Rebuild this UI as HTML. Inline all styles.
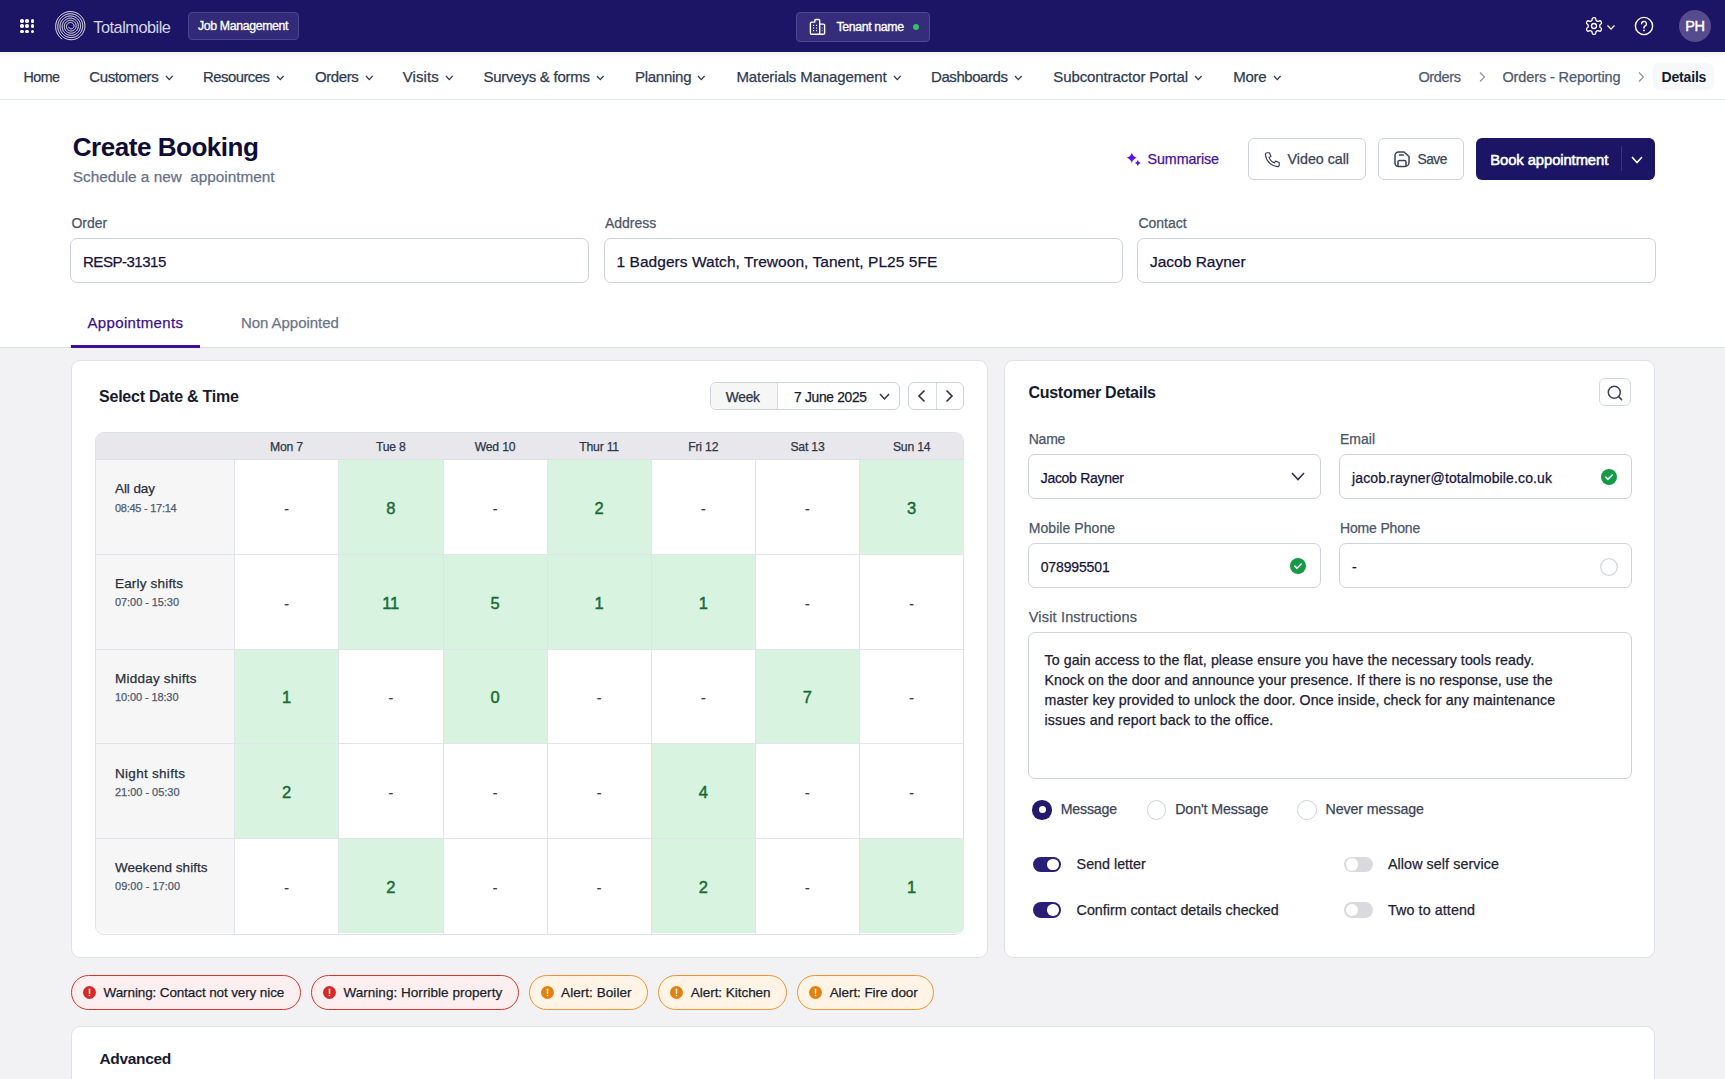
<!DOCTYPE html>
<html><head><meta charset="utf-8"><title>Create Booking</title>
<style>
html,body{margin:0;padding:0;}
body{width:1725px;height:1079px;position:relative;overflow:hidden;background:#f2f2f5;font-family:"Liberation Sans",sans-serif;}
.t{position:absolute;line-height:1em;white-space:nowrap;}
.r{position:absolute;}
svg.r{overflow:visible;}
</style></head><body>
<div class="r" style="left:0px;top:0px;width:1725px;height:52px;background:#1c1464;"></div>
<div class="r" style="left:20.0px;top:19.0px;width:3.6px;height:3.6px;background:#fff;border-radius:50%;"></div>
<div class="r" style="left:20.0px;top:24.3px;width:3.6px;height:3.6px;background:#fff;border-radius:50%;"></div>
<div class="r" style="left:20.0px;top:29.6px;width:3.6px;height:3.6px;background:#fff;border-radius:50%;"></div>
<div class="r" style="left:25.3px;top:19.0px;width:3.6px;height:3.6px;background:#fff;border-radius:50%;"></div>
<div class="r" style="left:25.3px;top:24.3px;width:3.6px;height:3.6px;background:#fff;border-radius:50%;"></div>
<div class="r" style="left:25.3px;top:29.6px;width:3.6px;height:3.6px;background:#fff;border-radius:50%;"></div>
<div class="r" style="left:30.6px;top:19.0px;width:3.6px;height:3.6px;background:#fff;border-radius:50%;"></div>
<div class="r" style="left:30.6px;top:24.3px;width:3.6px;height:3.6px;background:#fff;border-radius:50%;"></div>
<div class="r" style="left:30.6px;top:29.6px;width:3.6px;height:3.6px;background:#fff;border-radius:50%;"></div>
<svg class="r" style="left:55px;top:10px" width="32" height="32" viewBox="0 0 32 32"><path d="M13.73 16.95 L13.76 17.09 L13.81 17.23 L13.86 17.37 L13.92 17.50 L13.99 17.63 L14.07 17.76 L14.15 17.88 L14.25 18.00 L14.35 18.11 L14.47 18.22 L14.59 18.32 L14.72 18.42 L14.85 18.50 L14.99 18.58 L15.14 18.65 L15.29 18.70 L15.45 18.75 L15.61 18.79 L15.78 18.82 L15.95 18.84 L16.12 18.85 L16.29 18.84 L16.46 18.83 L16.64 18.80 L16.81 18.76 L16.98 18.71 L17.15 18.65 L17.32 18.58 L17.48 18.50 L17.63 18.40 L17.79 18.30 L17.93 18.18 L18.07 18.05 L18.20 17.92 L18.33 17.77 L18.44 17.62 L18.55 17.46 L18.64 17.29 L18.73 17.11 L18.80 16.92 L18.86 16.74 L18.91 16.54 L18.95 16.34 L18.97 16.14 L18.99 15.94 L18.99 15.73 L18.97 15.52 L18.94 15.32 L18.90 15.11 L18.84 14.91 L18.78 14.70 L18.69 14.51 L18.60 14.31 L18.49 14.12 L18.37 13.94 L18.23 13.77 L18.09 13.60 L17.93 13.44 L17.76 13.29 L17.58 13.15 L17.40 13.03 L17.20 12.91 L16.99 12.81 L16.78 12.72 L16.56 12.64 L16.34 12.58 L16.10 12.53 L15.87 12.49 L15.63 12.47 L15.39 12.47 L15.15 12.48 L14.91 12.51 L14.67 12.55 L14.43 12.61 L14.20 12.69 L13.96 12.78 L13.74 12.88 L13.52 13.00 L13.30 13.14 L13.10 13.29 L12.90 13.45 L12.71 13.63 L12.54 13.82 L12.37 14.02 L12.22 14.23 L12.08 14.45 L11.96 14.68 L11.85 14.93 L11.75 15.18 L11.68 15.43 L11.61 15.69 L11.57 15.96 L11.54 16.23 L11.53 16.51 L11.53 16.78 L11.56 17.06 L11.60 17.33 L11.66 17.60 L11.74 17.87 L11.83 18.14 L11.94 18.40 L12.07 18.65 L12.22 18.90 L12.38 19.14 L12.56 19.37 L12.76 19.58 L12.97 19.79 L13.19 19.98 L13.42 20.16 L13.67 20.32 L13.93 20.47 L14.20 20.60 L14.47 20.71 L14.76 20.81 L15.05 20.89 L15.35 20.95 L15.66 20.99 L15.96 21.01 L16.27 21.01 L16.58 21.00 L16.89 20.96 L17.20 20.90 L17.50 20.82 L17.81 20.72 L18.10 20.61 L18.39 20.47 L18.67 20.31 L18.94 20.14 L19.20 19.95 L19.45 19.74 L19.68 19.51 L19.90 19.27 L20.11 19.01 L20.30 18.74 L20.47 18.46 L20.63 18.17 L20.77 17.86 L20.88 17.55 L20.98 17.22 L21.06 16.89 L21.11 16.56 L21.15 16.22 L21.16 15.88 L21.15 15.53 L21.12 15.19 L21.06 14.84 L20.99 14.50 L20.89 14.17 L20.77 13.84 L20.63 13.51 L20.47 13.20 L20.28 12.89 L20.08 12.60 L19.86 12.32 L19.62 12.05 L19.36 11.80 L19.08 11.56 L18.79 11.34 L18.49 11.14 L18.17 10.96 L17.83 10.80 L17.49 10.66 L17.14 10.54 L16.78 10.45 L16.41 10.37 L16.04 10.33 L15.66 10.30 L15.29 10.30 L14.91 10.32 L14.53 10.37 L14.15 10.44 L13.78 10.54 L13.42 10.66 L13.06 10.80 L12.71 10.97 L12.37 11.16 L12.04 11.37 L11.72 11.60 L11.42 11.86 L11.14 12.13 L10.87 12.42 L10.62 12.73 L10.39 13.06 L10.18 13.40 L9.99 13.76 L9.83 14.13 L9.68 14.51 L9.57 14.90 L9.48 15.29 L9.41 15.70 L9.37 16.11 L9.35 16.52 L9.36 16.93 L9.40 17.35 L9.47 17.76 L9.56 18.16 L9.67 18.57 L9.82 18.96 L9.99 19.35 L10.18 19.73 L10.40 20.09 L10.64 20.44 L10.91 20.78 L11.19 21.10 L11.50 21.40 L11.83 21.68 L12.18 21.94 L12.54 22.18 L12.92 22.40 L13.31 22.59 L13.72 22.75 L14.14 22.90 L14.56 23.01 L15.00 23.10 L15.44 23.16 L15.88 23.19 L16.33 23.19 L16.78 23.16 L17.23 23.11 L17.67 23.03 L18.11 22.91 L18.54 22.77 L18.97 22.60 L19.38 22.41 L19.78 22.18 L20.17 21.94 L20.54 21.66 L20.89 21.36 L21.23 21.04 L21.55 20.70 L21.84 20.34 L22.11 19.95 L22.36 19.55 L22.58 19.14 L22.77 18.71 L22.94 18.26 L23.08 17.81 L23.19 17.34 L23.27 16.87 L23.32 16.39 L23.34 15.91 L23.32 15.43 L23.28 14.95 L23.21 14.47 L23.10 13.99 L22.97 13.52 L22.80 13.06 L22.61 12.61 L22.38 12.17 L22.13 11.74 L21.85 11.34 L21.54 10.94 L21.21 10.57 L20.86 10.22 L20.48 9.89 L20.08 9.59 L19.66 9.31 L19.22 9.06 L18.76 8.83 L18.29 8.64 L17.81 8.47 L17.32 8.34 L16.82 8.23 L16.31 8.16 L15.79 8.13 L15.28 8.12 L14.76 8.15 L14.24 8.21 L13.73 8.30 L13.22 8.43 L12.72 8.59 L12.24 8.78 L11.76 9.01 L11.29 9.26 L10.85 9.54 L10.42 9.86 L10.01 10.20 L9.62 10.56 L9.26 10.96 L8.92 11.37 L8.60 11.81 L8.32 12.27 L8.06 12.74 L7.84 13.24 L7.64 13.75 L7.48 14.27 L7.35 14.80 L7.26 15.34 L7.20 15.88 L7.17 16.43 L7.19 16.99 L7.23 17.54 L7.31 18.09 L7.43 18.63 L7.58 19.17 L7.77 19.70 L7.99 20.21 L8.24 20.71 L8.53 21.20 L8.84 21.67 L9.19 22.12 L9.56 22.54 L9.97 22.94 L10.40 23.32 L10.85 23.67 L11.33 23.99 L11.82 24.28 L12.34 24.54 L12.87 24.76 L13.42 24.95 L13.98 25.11 L14.55 25.23 L15.12 25.31 L15.71 25.36 L16.29 25.37 L16.88 25.34 L17.46 25.28 L18.05 25.17 L18.62 25.03 L19.19 24.85 L19.74 24.64 L20.28 24.39 L20.81 24.11 L21.32 23.79 L21.80 23.44 L22.27 23.06 L22.71 22.64 L23.12 22.20 L23.51 21.74 L23.87 21.24 L24.19 20.73 L24.48 20.19 L24.74 19.64 L24.97 19.07 L25.15 18.48 L25.30 17.88 L25.41 17.28 L25.48 16.66 L25.51 16.04 L25.51 15.42 L25.46 14.80 L25.37 14.18 L25.24 13.57 L25.08 12.96 L24.87 12.37 L24.63 11.79 L24.35 11.22 L24.03 10.67 L23.68 10.15 L23.29 9.64 L22.88 9.16 L22.43 8.71 L21.95 8.28 L21.44 7.89 L20.91 7.52 L20.36 7.20 L19.78 6.90 L19.19 6.65 L18.58 6.43 L17.95 6.25 L17.32 6.11 L16.67 6.01 L16.02 5.96 L15.36 5.94 L14.71 5.97 L14.05 6.04 L13.40 6.15 L12.76 6.30 L12.12 6.49 L11.50 6.73 L10.90 7.00 L10.31 7.31 L9.74 7.67 L9.19 8.05 L8.67 8.48 L8.18 8.93 L7.71 9.42 L7.28 9.94 L6.87 10.48 L6.51 11.05 L6.18 11.65 L5.89 12.26 L5.63 12.90 L5.42 13.55 L5.25 14.21 L5.12 14.88 L5.04 15.57 L5.00 16.26 L5.00 16.95 L5.05 17.64 L5.14 18.32 L5.28 19.01 L5.46 19.68 L5.68 20.34 L5.95 20.99 L6.25 21.62 L6.60 22.23 L6.99 22.82 L7.41 23.38 L7.87 23.92 L8.36 24.43 L8.89 24.90 L9.45 25.34 L10.03 25.75 L10.64 26.12 L11.28 26.45 L11.93 26.73 L12.61 26.98 L13.30 27.18 L14.00 27.34 L14.71 27.46 L15.43 27.53 L16.16 27.55 L16.88 27.53 L17.61 27.45 L18.33 27.34 L19.04 27.18 L19.74 26.97 L20.43 26.71 L21.10 26.42 L21.76 26.08 L22.39 25.69 L22.99 25.27 L23.57 24.81 L24.12 24.31 L24.64 23.78 L25.12 23.21 L25.57 22.61 L25.98 21.99 L26.35 21.34 L26.67 20.66 L26.96 19.96 L27.20 19.25 L27.39 18.52 L27.54 17.78 L27.64 17.03 L27.69 16.27 L27.69 15.51 L27.64 14.75 L27.55 13.99 L27.40 13.24 L27.21 12.50 L26.97 11.77 L26.69 11.06 L26.36 10.36 L25.98 9.69 L25.56 9.04 L25.10 8.41 L24.60 7.82 L24.06 7.26 L23.49 6.73 L22.88 6.24 L22.25 5.79 L21.58 5.38 L20.89 5.02 L20.17 4.69 L19.43 4.42 L18.68 4.19 L17.91 4.01 L17.13 3.87 L16.34 3.79 L15.55 3.76 L14.75 3.78 L13.96 3.85 L13.17 3.97 L12.38 4.14 L11.61 4.37 L10.86 4.64 L10.12 4.96 L9.40 5.32 L8.71 5.74 L8.04 6.19 L7.40 6.69 L6.80 7.23 L6.23 7.81 L5.69 8.42 L5.20 9.07 L4.75 9.75 L4.34 10.46 L3.98 11.20 L3.66 11.95 L3.39 12.73 L3.17 13.53 L3.01 14.34 L2.89 15.15 L2.83 15.98 L2.82 16.81 L2.86 17.64 L2.96 18.47 L3.11 19.29 L3.31 20.10 L3.56 20.89 L3.87 21.68 L4.22 22.44 L4.63 23.17 L5.08 23.89 L5.57 24.57 L6.11 25.22 L6.69 25.84 L7.31 26.42 L7.97 26.96 L8.66 27.45 L9.38 27.90 L10.13 28.31 L10.91 28.67 L11.71 28.98 L12.53 29.23 L13.36 29.44 L14.21 29.59 L15.07 29.68 L15.93 29.73 L16.79 29.71 L17.66 29.64 L18.52 29.52 L19.37 29.34 L20.20 29.11 L21.03 28.82 L21.83 28.48 L22.62 28.09 L23.37 27.65 L24.10 27.16 L24.80 26.62 L25.46 26.04 L26.09 25.42 L26.67 24.76 L27.22 24.06 L27.71 23.33 L28.16 22.56 L28.56 21.77 L28.91 20.95 L29.21 20.11 L29.46 19.25 L29.65 18.37 L29.78 17.49 L29.85 16.59 L29.87 15.70 L29.83 14.80 L29.74 13.90 L29.58 13.01 L29.37 12.13 L29.11 11.26 L28.78 10.41 L28.41 9.59 L27.98 8.78 L27.50 8.01 L26.97 7.26 L26.39 6.56 L25.77 5.88 L25.11 5.25 L24.40 4.66 L23.66 4.12 L22.88 3.62 L22.07 3.17 L21.24 2.78 L20.38 2.44 L19.49 2.15 L18.59 1.92 L17.68 1.75 L16.75 1.64 L15.82 1.59 L14.89 1.59 L13.96 1.66 L13.03 1.78 L12.11 1.97 L11.20 2.21 L10.31 2.52 L9.43 2.87 L8.59 3.29 L7.76 3.76 L6.97 4.28 L6.22 4.85 L5.49 5.47 L4.81 6.13 L4.18 6.84 L3.58 7.59 L3.04 8.37 L2.55 9.19 L2.11 10.05 L1.72 10.92 L1.39 11.83 L1.12 12.75 L0.91 13.69 L0.76 14.65 L0.67 15.61 L0.64 16.58 L0.67 17.55 L0.76 18.51 L0.92 19.47 L1.14 20.42 L1.42 21.36 L1.76 22.27 L2.15 23.17 L2.61 24.04 L3.12 24.87 L3.68 25.68 L4.29 26.45 L4.95 27.18 L5.66 27.87 L6.41 28.51 L7.21 29.10" fill="none" stroke="#fff" stroke-width="0.95"/></svg>
<div class="t" style="left:93.3px;top:19px;font-size:16.35px;color:#d6d6e6;letter-spacing:-0.5px;">Totalmobile</div>
<div class="r" style="left:188px;top:12px;width:111px;height:28px;background:#322a78;border:1px solid #4a4390;border-radius:4px;box-sizing:border-box;"></div>
<div class="t" style="left:198.0px;top:20px;font-size:12.3px;color:#fff;-webkit-text-stroke:0.4px #fff;letter-spacing:-0.35px;-webkit-text-stroke:0.32px #fff;">Job Management</div>
<div class="r" style="left:796px;top:12px;width:134px;height:30px;background:#352d7b;border:1px solid #4e4794;border-radius:4px;box-sizing:border-box;"></div>
<svg class="r" style="left:809px;top:19px" width="17" height="17" viewBox="0 0 17 17"><path d="M1.4 14.2V4.3Q1.4 3.1 2.6 3.1H5.8V1.7Q5.8 .5 7 .5H9.5Q10.7 .5 10.7 1.7V15.3M10.7 5.1H14.4Q15.6 5.1 15.6 6.3V14.1Q15.6 15.3 14.4 15.3H2.6Q1.4 15.3 1.4 14.1" fill="none" stroke="#fff" stroke-width="1.4" stroke-linejoin="round"/><g fill="#fff"><rect x="4" y="5.8" width="1.1" height="1.1"/><rect x="7" y="5.8" width="1.1" height="1.1"/><rect x="4" y="8.5" width="1.1" height="1.1"/><rect x="7" y="8.5" width="1.1" height="1.1"/><rect x="4" y="11.1" width="1.1" height="1.1"/><rect x="7" y="11.1" width="1.1" height="1.1"/><rect x="12.6" y="8.5" width="1.1" height="1.1" opacity=".6"/><rect x="12.6" y="11.1" width="1.1" height="1.1" opacity=".6"/></g></svg>
<div class="t" style="left:836.5px;top:21px;font-size:12.3px;color:#fff;-webkit-text-stroke:0.4px #fff;letter-spacing:-0.362px;-webkit-text-stroke:0.32px #fff;">Tenant name</div>
<div class="r" style="left:912.5px;top:24px;width:6px;height:6px;background:#2ec55e;border-radius:50%;"></div>
<svg class="r" style="left:1584px;top:16px" width="20" height="20" viewBox="0 0 24 24"><path d="M12.22 2h-.44a2 2 0 0 0-2 2v.18a2 2 0 0 1-1 1.73l-.43.25a2 2 0 0 1-2 0l-.15-.08a2 2 0 0 0-2.73.73l-.22.38a2 2 0 0 0 .73 2.73l.15.1a2 2 0 0 1 1 1.72v.51a2 2 0 0 1-1 1.74l-.15.09a2 2 0 0 0-.73 2.73l.22.38a2 2 0 0 0 2.73.73l.15-.08a2 2 0 0 1 2 0l.43.25a2 2 0 0 1 1 1.73V20a2 2 0 0 0 2 2h.44a2 2 0 0 0 2-2v-.18a2 2 0 0 1 1-1.73l.43-.25a2 2 0 0 1 2 0l.15.08a2 2 0 0 0 2.73-.73l.22-.39a2 2 0 0 0-.73-2.73l-.15-.08a2 2 0 0 1-1-1.74v-.5a2 2 0 0 1 1-1.74l.15-.09a2 2 0 0 0 .73-2.73l-.22-.38a2 2 0 0 0-2.73-.73l-.15.08a2 2 0 0 1-2 0l-.43-.25a2 2 0 0 1-1-1.73V4a2 2 0 0 0-2-2z" fill="none" stroke="#fff" stroke-width="1.6"/><circle cx="12" cy="12" r="3" fill="none" stroke="#fff" stroke-width="1.6"/></svg>
<svg class="r" style="left:1606px;top:24px" width="10" height="7" viewBox="0 0 10 7"><path d="M1.5 1.5l3.5 3.5 3.5-3.5" fill="none" stroke="#fff" stroke-width="1.3"/></svg>
<svg class="r" style="left:1634px;top:16px" width="20" height="20" viewBox="0 0 20 20"><circle cx="10" cy="10" r="8.6" fill="none" stroke="#fff" stroke-width="1.4"/><path d="M7.6 7.8a2.4 2.4 0 1 1 3.4 2.2c-.7.3-1 .8-1 1.5v.5" fill="none" stroke="#fff" stroke-width="1.4" stroke-linecap="round"/><circle cx="10" cy="14.4" r=".9" fill="#fff"/></svg>
<div class="r" style="left:1679px;top:10px;width:32px;height:32px;background:#554b8d;border-radius:50%;"></div>
<div class="t" style="left:1679.0px;top:19px;font-size:14.5px;color:#fff;-webkit-text-stroke:0.4px #fff;width:32px;text-align:center;-webkit-text-stroke:0.45px #fff;letter-spacing:-0.3px;">PH</div>
<div class="r" style="left:0px;top:52px;width:1725px;height:47px;background:#fff;"></div>
<div class="r" style="left:0px;top:52px;width:1725px;height:6px;background:linear-gradient(#ececef,#fff);opacity:.7;"></div>
<div class="r" style="left:0px;top:99px;width:1725px;height:1px;background:#dfe3ea;"></div>
<div class="t" style="left:23.5px;top:70px;font-size:14.25px;color:#2e3b52;-webkit-text-stroke:0.25px #2e3b52;letter-spacing:-0.5px;">Home</div>
<div class="t" style="left:89.3px;top:69px;font-size:15px;color:#2e3b52;-webkit-text-stroke:0.25px #2e3b52;letter-spacing:-0.39px;">Customers</div>
<svg class="r" style="left:164.5px;top:75px" width="8.6" height="5.6" viewBox="0 0 8.6 5.6"><path d="M1 1l3.3 3.6l3.3 -3.6" fill="none" stroke="#2e3b52" stroke-width="1.3"/></svg>
<div class="t" style="left:203.0px;top:70px;font-size:14.85px;color:#2e3b52;-webkit-text-stroke:0.25px #2e3b52;letter-spacing:-0.5px;">Resources</div>
<svg class="r" style="left:275.8px;top:75px" width="8.6" height="5.6" viewBox="0 0 8.6 5.6"><path d="M1 1l3.3 3.6l3.3 -3.6" fill="none" stroke="#2e3b52" stroke-width="1.3"/></svg>
<div class="t" style="left:315.0px;top:69px;font-size:15px;color:#2e3b52;-webkit-text-stroke:0.25px #2e3b52;letter-spacing:-0.429px;">Orders</div>
<svg class="r" style="left:364.5px;top:75px" width="8.6" height="5.6" viewBox="0 0 8.6 5.6"><path d="M1 1l3.3 3.6l3.3 -3.6" fill="none" stroke="#2e3b52" stroke-width="1.3"/></svg>
<div class="t" style="left:402.7px;top:69px;font-size:15px;color:#2e3b52;-webkit-text-stroke:0.25px #2e3b52;letter-spacing:0.086px;">Visits</div>
<svg class="r" style="left:444.5px;top:75px" width="8.6" height="5.6" viewBox="0 0 8.6 5.6"><path d="M1 1l3.3 3.6l3.3 -3.6" fill="none" stroke="#2e3b52" stroke-width="1.3"/></svg>
<div class="t" style="left:483.5px;top:69px;font-size:15px;color:#2e3b52;-webkit-text-stroke:0.25px #2e3b52;letter-spacing:-0.252px;">Surveys &amp; forms</div>
<svg class="r" style="left:595.8px;top:75px" width="8.6" height="5.6" viewBox="0 0 8.6 5.6"><path d="M1 1l3.3 3.6l3.3 -3.6" fill="none" stroke="#2e3b52" stroke-width="1.3"/></svg>
<div class="t" style="left:635.0px;top:69px;font-size:15px;color:#2e3b52;-webkit-text-stroke:0.25px #2e3b52;letter-spacing:-0.269px;">Planning</div>
<svg class="r" style="left:697.3px;top:75px" width="8.6" height="5.6" viewBox="0 0 8.6 5.6"><path d="M1 1l3.3 3.6l3.3 -3.6" fill="none" stroke="#2e3b52" stroke-width="1.3"/></svg>
<div class="t" style="left:736.5px;top:69px;font-size:15px;color:#2e3b52;-webkit-text-stroke:0.25px #2e3b52;letter-spacing:-0.125px;">Materials Management</div>
<svg class="r" style="left:892.5px;top:75px" width="8.6" height="5.6" viewBox="0 0 8.6 5.6"><path d="M1 1l3.3 3.6l3.3 -3.6" fill="none" stroke="#2e3b52" stroke-width="1.3"/></svg>
<div class="t" style="left:931.0px;top:69px;font-size:15px;color:#2e3b52;-webkit-text-stroke:0.25px #2e3b52;letter-spacing:-0.432px;">Dashboards</div>
<svg class="r" style="left:1013.8px;top:75px" width="8.6" height="5.6" viewBox="0 0 8.6 5.6"><path d="M1 1l3.3 3.6l3.3 -3.6" fill="none" stroke="#2e3b52" stroke-width="1.3"/></svg>
<div class="t" style="left:1053.3px;top:69px;font-size:15px;color:#2e3b52;-webkit-text-stroke:0.25px #2e3b52;letter-spacing:-0.107px;">Subcontractor Portal</div>
<svg class="r" style="left:1193.8px;top:75px" width="8.6" height="5.6" viewBox="0 0 8.6 5.6"><path d="M1 1l3.3 3.6l3.3 -3.6" fill="none" stroke="#2e3b52" stroke-width="1.3"/></svg>
<div class="t" style="left:1233.3px;top:69px;font-size:15px;color:#2e3b52;-webkit-text-stroke:0.25px #2e3b52;letter-spacing:-0.259px;">More</div>
<svg class="r" style="left:1272.5px;top:75px" width="8.6" height="5.6" viewBox="0 0 8.6 5.6"><path d="M1 1l3.3 3.6l3.3 -3.6" fill="none" stroke="#2e3b52" stroke-width="1.3"/></svg>
<div class="t" style="left:1418.4px;top:70px;font-size:14.5px;color:#4d5a70;-webkit-text-stroke:0.25px #4d5a70;letter-spacing:-0.343px;">Orders</div>
<svg class="r" style="left:1478px;top:71px" width="9" height="12" viewBox="0 0 9 12"><path d="M2 1.5l4.5 4.5-4.5 4.5" fill="none" stroke="#8a93a3" stroke-width="1.2"/></svg>
<div class="t" style="left:1502.4px;top:70px;font-size:14.5px;color:#4d5a70;-webkit-text-stroke:0.25px #4d5a70;letter-spacing:-0.11px;">Orders - Reporting</div>
<svg class="r" style="left:1637px;top:71px" width="9" height="12" viewBox="0 0 9 12"><path d="M2 1.5l4.5 4.5-4.5 4.5" fill="none" stroke="#8a93a3" stroke-width="1.2"/></svg>
<div class="r" style="left:1653px;top:62.5px;width:61px;height:27px;background:#f7f8f9;border-radius:6px;"></div>
<div class="t" style="left:1661.6px;top:70px;font-size:14px;color:#151a2e;font-weight:700;letter-spacing:-0.185px;">Details</div>
<div class="r" style="left:0px;top:100px;width:1725px;height:248px;background:#fff;"></div>
<div class="t" style="left:72.8px;top:134px;font-size:26.07px;color:#0f0c36;font-weight:700;letter-spacing:-0.5px;">Create Booking</div>
<div class="t" style="left:72.8px;top:169px;font-size:15.3px;color:#66728a;-webkit-text-stroke:0.25px #66728a;letter-spacing:0.004px;">Schedule a new&nbsp; appointment</div>
<svg class="r" style="left:1126px;top:152px" width="16" height="15" viewBox="0 0 16 15"><path d="M5.8 0.7Q6.9 4.6 10.8 5.8 6.9 7 5.8 10.9 4.7 7 0.8 5.8 4.7 4.6 5.8 0.7z" fill="#5a0fe6"/><path d="M11.8 8Q12.4 10.4 14.8 11 12.4 11.6 11.8 14 11.2 11.6 8.8 11 11.2 10.4 11.8 8z" fill="#5a0fe6"/></svg>
<div class="t" style="left:1147.6px;top:152px;font-size:14.3px;color:#45109a;-webkit-text-stroke:0.25px #45109a;letter-spacing:-0.114px;">Summarise</div>
<div class="r" style="left:1248px;top:138px;width:118px;height:42px;background:#fff;border:1px solid #cdd2dc;border-radius:6px;box-sizing:border-box;"></div>
<svg class="r" style="left:1263px;top:150px" width="19" height="19" viewBox="0 0 24 24"><path d="M5 3.5h3.2l1.8 4.6-2.3 1.5a11 11 0 0 0 6.7 6.7l1.5-2.3 4.6 1.8V19a2 2 0 0 1-2.2 2A17 17 0 0 1 3 5.7a2 2 0 0 1 2-2.2z" fill="none" stroke="#3a4456" stroke-width="1.5" stroke-linejoin="round"/></svg>
<div class="t" style="left:1287.6px;top:152px;font-size:14.3px;color:#3a4456;-webkit-text-stroke:0.25px #3a4456;letter-spacing:-0.039px;">Video call</div>
<div class="r" style="left:1378px;top:138px;width:86px;height:42px;background:#fff;border:1px solid #cdd2dc;border-radius:6px;box-sizing:border-box;"></div>
<svg class="r" style="left:1393px;top:150px" width="18" height="18" viewBox="0 0 18 18"><path d="M2 5.5a3.5 3.5 0 0 1 3.5-3.5h5.5l5 4.5v6a4 4 0 0 1-4 4h-6.5a3.5 3.5 0 0 1-3.5-3.5z" fill="none" stroke="#3a4456" stroke-width="1.5"/><path d="M5 16v-4a1.5 1.5 0 0 1 1.5-1.5h5A1.5 1.5 0 0 1 13 12v4M6.5 5h4" fill="none" stroke="#3a4456" stroke-width="1.5" stroke-linecap="round"/></svg>
<div class="t" style="left:1417.5px;top:153px;font-size:13.78px;color:#3a4456;-webkit-text-stroke:0.25px #3a4456;letter-spacing:-0.5px;">Save</div>
<div class="r" style="left:1476px;top:138px;width:179px;height:42px;background:#1c1464;border-radius:6px;"></div>
<div class="t" style="left:1490.3px;top:153px;font-size:14.8px;color:#fff;-webkit-text-stroke:0.4px #fff;letter-spacing:-0.087px;-webkit-text-stroke:0.55px #fff;">Book appointment</div>
<div class="r" style="left:1620.5px;top:145.5px;width:1px;height:25px;background:#3a3380;"></div>
<svg class="r" style="left:1631px;top:155.5px" width="12" height="7.5" viewBox="0 0 12 7.5"><path d="M1 1l5.0 5.5l5.0 -5.5" fill="none" stroke="#fff" stroke-width="1.6"/></svg>
<div class="t" style="left:71.4px;top:216px;font-size:14px;color:#4b5669;-webkit-text-stroke:0.25px #4b5669;">Order</div>
<div class="r" style="left:70px;top:238px;width:519px;height:45px;background:#fff;border:1px solid #cdd2dc;border-radius:7px;box-sizing:border-box;"></div>
<div class="t" style="left:83.0px;top:254px;font-size:15.06px;color:#15143a;-webkit-text-stroke:0.25px #15143a;letter-spacing:-0.5px;">RESP-31315</div>
<div class="t" style="left:604.9px;top:216px;font-size:14px;color:#4b5669;-webkit-text-stroke:0.25px #4b5669;">Address</div>
<div class="r" style="left:603.5px;top:238px;width:519px;height:45px;background:#fff;border:1px solid #cdd2dc;border-radius:7px;box-sizing:border-box;"></div>
<div class="t" style="left:616.5px;top:254px;font-size:15.5px;color:#15143a;-webkit-text-stroke:0.25px #15143a;letter-spacing:0.049px;">1 Badgers Watch, Trewoon, Tanent, PL25 5FE</div>
<div class="t" style="left:1138.4px;top:216px;font-size:14px;color:#4b5669;-webkit-text-stroke:0.25px #4b5669;">Contact</div>
<div class="r" style="left:1137px;top:238px;width:519px;height:45px;background:#fff;border:1px solid #cdd2dc;border-radius:7px;box-sizing:border-box;"></div>
<div class="t" style="left:1150.0px;top:254px;font-size:15.5px;color:#15143a;-webkit-text-stroke:0.25px #15143a;">Jacob Rayner</div>
<div class="t" style="left:87.5px;top:315px;font-size:15px;color:#3b0f8e;-webkit-text-stroke:0.25px #3b0f8e;letter-spacing:0.343px;">Appointments</div>
<div class="t" style="left:240.9px;top:315px;font-size:15px;color:#6b7486;-webkit-text-stroke:0.25px #6b7486;letter-spacing:-0.043px;">Non Appointed</div>
<div class="r" style="left:0px;top:347px;width:1725px;height:1px;background:#d9dde4;"></div>
<div class="r" style="left:71px;top:345px;width:129px;height:3px;background:#3c0e92;"></div>
<div class="r" style="left:0px;top:348px;width:1725px;height:731px;background:#f2f2f5;"></div>
<div class="r" style="left:71px;top:360px;width:917px;height:598px;background:#fff;border:1px solid #dde1e8;border-radius:9px;box-sizing:border-box;"></div>
<div class="t" style="left:99.0px;top:389px;font-size:16px;color:#161b2e;font-weight:700;letter-spacing:-0.222px;">Select Date &amp; Time</div>
<div class="r" style="left:709.5px;top:382px;width:190px;height:28px;background:#fff;border:1px solid #cfd4dc;border-radius:6px;box-sizing:border-box;"></div>
<div class="r" style="left:710.5px;top:383px;width:66px;height:26px;background:#f6f6f7;border-radius:5px 0 0 5px;"></div>
<div class="r" style="left:776.5px;top:383px;width:1px;height:26px;background:#d6dae1;"></div>
<div class="t" style="left:725.7px;top:391px;font-size:13.8px;color:#2a3346;-webkit-text-stroke:0.25px #2a3346;letter-spacing:-0.242px;">Week</div>
<div class="t" style="left:794.0px;top:391px;font-size:13.8px;color:#161b2e;-webkit-text-stroke:0.25px #161b2e;letter-spacing:-0.297px;">7 June 2025</div>
<svg class="r" style="left:879px;top:392.5px" width="11" height="7" viewBox="0 0 11 7"><path d="M1 1l4.5 5l4.5 -5" fill="none" stroke="#2a3346" stroke-width="1.5"/></svg>
<div class="r" style="left:907.5px;top:382px;width:56px;height:28px;background:#fff;border:1px solid #cfd4dc;border-radius:6px;box-sizing:border-box;"></div>
<div class="r" style="left:936px;top:383px;width:1px;height:26px;background:#d6dae1;"></div>
<svg class="r" style="left:916px;top:389px" width="11" height="14" viewBox="0 0 11 14"><path d="M8.5 1.5L3 7l5.5 5.5" fill="none" stroke="#2a3346" stroke-width="1.6"/></svg>
<svg class="r" style="left:944px;top:389px" width="11" height="14" viewBox="0 0 11 14"><path d="M2.5 1.5L8 7l-5.5 5.5" fill="none" stroke="#2a3346" stroke-width="1.6"/></svg>
<div class="r" style="left:95px;top:432px;width:869px;height:502.5px;border:1px solid #dde1e8;border-radius:9px;box-sizing:border-box;overflow:hidden;background:#fff;">
</div>
<div class="r" style="left:96px;top:433px;width:867px;height:27px;background:#e7e7ec;border-radius:8px 8px 0 0;"></div>
<div class="r" style="left:96px;top:459px;width:867px;height:1px;background:#dcdfe5;"></div>
<div class="t" style="left:234.5px;top:441px;font-size:12.2px;color:#2f3747;-webkit-text-stroke:0.25px #2f3747;width:104.0px;text-align:center;letter-spacing:-0.2px;">Mon 7</div>
<div class="t" style="left:338.5px;top:441px;font-size:12.2px;color:#2f3747;-webkit-text-stroke:0.25px #2f3747;width:104.5px;text-align:center;letter-spacing:-0.2px;">Tue 8</div>
<div class="t" style="left:443.0px;top:441px;font-size:12.2px;color:#2f3747;-webkit-text-stroke:0.25px #2f3747;width:104px;text-align:center;letter-spacing:-0.2px;">Wed 10</div>
<div class="t" style="left:547.0px;top:441px;font-size:12.2px;color:#2f3747;-webkit-text-stroke:0.25px #2f3747;width:104.20000000000005px;text-align:center;letter-spacing:-0.2px;">Thur 11</div>
<div class="t" style="left:651.2px;top:441px;font-size:12.2px;color:#2f3747;-webkit-text-stroke:0.25px #2f3747;width:104.09999999999991px;text-align:center;letter-spacing:-0.2px;">Fri 12</div>
<div class="t" style="left:755.3px;top:441px;font-size:12.2px;color:#2f3747;-webkit-text-stroke:0.25px #2f3747;width:104.30000000000007px;text-align:center;letter-spacing:-0.2px;">Sat 13</div>
<div class="t" style="left:859.6px;top:441px;font-size:12.2px;color:#2f3747;-webkit-text-stroke:0.25px #2f3747;width:104.0px;text-align:center;letter-spacing:-0.2px;">Sun 14</div>
<div class="r" style="left:96px;top:460.0px;width:138.5px;height:94.69999999999999px;background:#f6f6f7;"></div>
<div class="t" style="left:115.0px;top:482px;font-size:13.5px;color:#2a2f3c;-webkit-text-stroke:0.25px #2a2f3c;letter-spacing:-0.087px;">All day</div>
<div class="t" style="left:115.0px;top:503px;font-size:11px;color:#4e5a70;-webkit-text-stroke:0.25px #4e5a70;letter-spacing:-0.261px;">08:45 - 17:14</div>
<div class="t" style="left:234.5px;top:502px;font-size:14px;color:#3a3f4a;-webkit-text-stroke:0.25px #3a3f4a;width:104.0px;text-align:center;">-</div>
<div class="r" style="left:338.5px;top:459.8px;width:104.5px;height:94.69999999999999px;background:#d8f3e0;"></div>
<div class="t" style="left:338.5px;top:500px;font-size:16.5px;color:#186b35;-webkit-text-stroke:0.4px #186b35;width:104.5px;text-align:center;-webkit-text-stroke:0.45px #186b35;">8</div>
<div class="t" style="left:443.0px;top:502px;font-size:14px;color:#3a3f4a;-webkit-text-stroke:0.25px #3a3f4a;width:104px;text-align:center;">-</div>
<div class="r" style="left:547px;top:459.8px;width:104.20000000000005px;height:94.69999999999999px;background:#d8f3e0;"></div>
<div class="t" style="left:547.0px;top:500px;font-size:16.5px;color:#186b35;-webkit-text-stroke:0.4px #186b35;width:104.20000000000005px;text-align:center;-webkit-text-stroke:0.45px #186b35;">2</div>
<div class="t" style="left:651.2px;top:502px;font-size:14px;color:#3a3f4a;-webkit-text-stroke:0.25px #3a3f4a;width:104.09999999999991px;text-align:center;">-</div>
<div class="t" style="left:755.3px;top:502px;font-size:14px;color:#3a3f4a;-webkit-text-stroke:0.25px #3a3f4a;width:104.30000000000007px;text-align:center;">-</div>
<div class="r" style="left:859.6px;top:459.8px;width:104.0px;height:94.69999999999999px;background:#d8f3e0;"></div>
<div class="t" style="left:859.6px;top:500px;font-size:16.5px;color:#186b35;-webkit-text-stroke:0.4px #186b35;width:104.0px;text-align:center;-webkit-text-stroke:0.45px #186b35;">3</div>
<div class="r" style="left:96px;top:554.7px;width:138.5px;height:94.70000000000005px;background:#f6f6f7;"></div>
<div class="t" style="left:115.0px;top:577px;font-size:13.5px;color:#2a2f3c;-webkit-text-stroke:0.25px #2a2f3c;letter-spacing:0.18px;">Early shifts</div>
<div class="t" style="left:115.0px;top:597px;font-size:11px;color:#4e5a70;-webkit-text-stroke:0.25px #4e5a70;letter-spacing:-0.069px;">07:00 - 15:30</div>
<div class="t" style="left:234.5px;top:597px;font-size:14px;color:#3a3f4a;-webkit-text-stroke:0.25px #3a3f4a;width:104.0px;text-align:center;">-</div>
<div class="r" style="left:338.5px;top:554.5px;width:104.5px;height:94.70000000000005px;background:#d8f3e0;"></div>
<div class="t" style="left:338.5px;top:595px;font-size:16.5px;color:#186b35;-webkit-text-stroke:0.4px #186b35;width:104.5px;text-align:center;-webkit-text-stroke:0.45px #186b35;">11</div>
<div class="r" style="left:443px;top:554.5px;width:104px;height:94.70000000000005px;background:#d8f3e0;"></div>
<div class="t" style="left:443.0px;top:595px;font-size:16.5px;color:#186b35;-webkit-text-stroke:0.4px #186b35;width:104px;text-align:center;-webkit-text-stroke:0.45px #186b35;">5</div>
<div class="r" style="left:547px;top:554.5px;width:104.20000000000005px;height:94.70000000000005px;background:#d8f3e0;"></div>
<div class="t" style="left:547.0px;top:595px;font-size:16.5px;color:#186b35;-webkit-text-stroke:0.4px #186b35;width:104.20000000000005px;text-align:center;-webkit-text-stroke:0.45px #186b35;">1</div>
<div class="r" style="left:651.2px;top:554.5px;width:104.09999999999991px;height:94.70000000000005px;background:#d8f3e0;"></div>
<div class="t" style="left:651.2px;top:595px;font-size:16.5px;color:#186b35;-webkit-text-stroke:0.4px #186b35;width:104.09999999999991px;text-align:center;-webkit-text-stroke:0.45px #186b35;">1</div>
<div class="t" style="left:755.3px;top:597px;font-size:14px;color:#3a3f4a;-webkit-text-stroke:0.25px #3a3f4a;width:104.30000000000007px;text-align:center;">-</div>
<div class="t" style="left:859.6px;top:597px;font-size:14px;color:#3a3f4a;-webkit-text-stroke:0.25px #3a3f4a;width:104.0px;text-align:center;">-</div>
<div class="r" style="left:96px;top:649.4000000000001px;width:138.5px;height:94.69999999999993px;background:#f6f6f7;"></div>
<div class="t" style="left:115.0px;top:672px;font-size:13.5px;color:#2a2f3c;-webkit-text-stroke:0.25px #2a2f3c;letter-spacing:0.227px;">Midday shifts</div>
<div class="t" style="left:115.0px;top:692px;font-size:11px;color:#4e5a70;-webkit-text-stroke:0.25px #4e5a70;letter-spacing:-0.111px;">10:00 - 18:30</div>
<div class="r" style="left:234.5px;top:649.2px;width:104.0px;height:94.69999999999993px;background:#d8f3e0;"></div>
<div class="t" style="left:234.5px;top:689px;font-size:16.5px;color:#186b35;-webkit-text-stroke:0.4px #186b35;width:104.0px;text-align:center;-webkit-text-stroke:0.45px #186b35;">1</div>
<div class="t" style="left:338.5px;top:691px;font-size:14px;color:#3a3f4a;-webkit-text-stroke:0.25px #3a3f4a;width:104.5px;text-align:center;">-</div>
<div class="r" style="left:443px;top:649.2px;width:104px;height:94.69999999999993px;background:#d8f3e0;"></div>
<div class="t" style="left:443.0px;top:689px;font-size:16.5px;color:#186b35;-webkit-text-stroke:0.4px #186b35;width:104px;text-align:center;-webkit-text-stroke:0.45px #186b35;">0</div>
<div class="t" style="left:547.0px;top:691px;font-size:14px;color:#3a3f4a;-webkit-text-stroke:0.25px #3a3f4a;width:104.20000000000005px;text-align:center;">-</div>
<div class="t" style="left:651.2px;top:691px;font-size:14px;color:#3a3f4a;-webkit-text-stroke:0.25px #3a3f4a;width:104.09999999999991px;text-align:center;">-</div>
<div class="r" style="left:755.3px;top:649.2px;width:104.30000000000007px;height:94.69999999999993px;background:#d8f3e0;"></div>
<div class="t" style="left:755.3px;top:689px;font-size:16.5px;color:#186b35;-webkit-text-stroke:0.4px #186b35;width:104.30000000000007px;text-align:center;-webkit-text-stroke:0.45px #186b35;">7</div>
<div class="t" style="left:859.6px;top:691px;font-size:14px;color:#3a3f4a;-webkit-text-stroke:0.25px #3a3f4a;width:104.0px;text-align:center;">-</div>
<div class="r" style="left:96px;top:744.1px;width:138.5px;height:94.70000000000005px;background:#f6f6f7;"></div>
<div class="t" style="left:115.0px;top:767px;font-size:13.5px;color:#2a2f3c;-webkit-text-stroke:0.25px #2a2f3c;letter-spacing:0.293px;">Night shifts</div>
<div class="t" style="left:115.0px;top:787px;font-size:11px;color:#4e5a70;-webkit-text-stroke:0.25px #4e5a70;letter-spacing:-0.028px;">21:00 - 05:30</div>
<div class="r" style="left:234.5px;top:743.9px;width:104.0px;height:94.70000000000005px;background:#d8f3e0;"></div>
<div class="t" style="left:234.5px;top:784px;font-size:16.5px;color:#186b35;-webkit-text-stroke:0.4px #186b35;width:104.0px;text-align:center;-webkit-text-stroke:0.45px #186b35;">2</div>
<div class="t" style="left:338.5px;top:786px;font-size:14px;color:#3a3f4a;-webkit-text-stroke:0.25px #3a3f4a;width:104.5px;text-align:center;">-</div>
<div class="t" style="left:443.0px;top:786px;font-size:14px;color:#3a3f4a;-webkit-text-stroke:0.25px #3a3f4a;width:104px;text-align:center;">-</div>
<div class="t" style="left:547.0px;top:786px;font-size:14px;color:#3a3f4a;-webkit-text-stroke:0.25px #3a3f4a;width:104.20000000000005px;text-align:center;">-</div>
<div class="r" style="left:651.2px;top:743.9px;width:104.09999999999991px;height:94.70000000000005px;background:#d8f3e0;"></div>
<div class="t" style="left:651.2px;top:784px;font-size:16.5px;color:#186b35;-webkit-text-stroke:0.4px #186b35;width:104.09999999999991px;text-align:center;-webkit-text-stroke:0.45px #186b35;">4</div>
<div class="t" style="left:755.3px;top:786px;font-size:14px;color:#3a3f4a;-webkit-text-stroke:0.25px #3a3f4a;width:104.30000000000007px;text-align:center;">-</div>
<div class="t" style="left:859.6px;top:786px;font-size:14px;color:#3a3f4a;-webkit-text-stroke:0.25px #3a3f4a;width:104.0px;text-align:center;">-</div>
<div class="r" style="left:96px;top:838.8000000000001px;width:138.5px;height:94.69999999999993px;background:#f6f6f7;border-radius:0 0 0 8px;"></div>
<div class="t" style="left:115.0px;top:861px;font-size:13.5px;color:#2a2f3c;-webkit-text-stroke:0.25px #2a2f3c;letter-spacing:0.035px;">Weekend shifts</div>
<div class="t" style="left:115.0px;top:881px;font-size:11px;color:#4e5a70;-webkit-text-stroke:0.25px #4e5a70;letter-spacing:0.014px;">09:00 - 17:00</div>
<div class="t" style="left:234.5px;top:881px;font-size:14px;color:#3a3f4a;-webkit-text-stroke:0.25px #3a3f4a;width:104.0px;text-align:center;">-</div>
<div class="r" style="left:338.5px;top:838.6px;width:104.5px;height:94.69999999999993px;background:#d8f3e0;"></div>
<div class="t" style="left:338.5px;top:879px;font-size:16.5px;color:#186b35;-webkit-text-stroke:0.4px #186b35;width:104.5px;text-align:center;-webkit-text-stroke:0.45px #186b35;">2</div>
<div class="t" style="left:443.0px;top:881px;font-size:14px;color:#3a3f4a;-webkit-text-stroke:0.25px #3a3f4a;width:104px;text-align:center;">-</div>
<div class="t" style="left:547.0px;top:881px;font-size:14px;color:#3a3f4a;-webkit-text-stroke:0.25px #3a3f4a;width:104.20000000000005px;text-align:center;">-</div>
<div class="r" style="left:651.2px;top:838.6px;width:104.09999999999991px;height:94.69999999999993px;background:#d8f3e0;"></div>
<div class="t" style="left:651.2px;top:879px;font-size:16.5px;color:#186b35;-webkit-text-stroke:0.4px #186b35;width:104.09999999999991px;text-align:center;-webkit-text-stroke:0.45px #186b35;">2</div>
<div class="t" style="left:755.3px;top:881px;font-size:14px;color:#3a3f4a;-webkit-text-stroke:0.25px #3a3f4a;width:104.30000000000007px;text-align:center;">-</div>
<div class="r" style="left:859.6px;top:838.6px;width:104.0px;height:94.69999999999993px;background:#d8f3e0;border-radius:0 0 8px 0;"></div>
<div class="t" style="left:859.6px;top:879px;font-size:16.5px;color:#186b35;-webkit-text-stroke:0.4px #186b35;width:104.0px;text-align:center;-webkit-text-stroke:0.45px #186b35;">1</div>
<div class="r" style="left:234.0px;top:460px;width:1px;height:473.5px;background:#e1e4ea;"></div>
<div class="r" style="left:338.0px;top:460px;width:1px;height:473.5px;background:#e1e4ea;"></div>
<div class="r" style="left:442.5px;top:460px;width:1px;height:473.5px;background:#e1e4ea;"></div>
<div class="r" style="left:546.5px;top:460px;width:1px;height:473.5px;background:#e1e4ea;"></div>
<div class="r" style="left:650.7px;top:460px;width:1px;height:473.5px;background:#e1e4ea;"></div>
<div class="r" style="left:754.8px;top:460px;width:1px;height:473.5px;background:#e1e4ea;"></div>
<div class="r" style="left:859.1px;top:460px;width:1px;height:473.5px;background:#e1e4ea;"></div>
<div class="r" style="left:96px;top:554.0px;width:867px;height:1px;background:#e1e4ea;"></div>
<div class="r" style="left:96px;top:648.7px;width:867px;height:1px;background:#e1e4ea;"></div>
<div class="r" style="left:96px;top:743.4px;width:867px;height:1px;background:#e1e4ea;"></div>
<div class="r" style="left:96px;top:838.1px;width:867px;height:1px;background:#e1e4ea;"></div>
<div class="r" style="left:1004px;top:360px;width:651px;height:598px;background:#fff;border:1px solid #dde1e8;border-radius:9px;box-sizing:border-box;"></div>
<div class="t" style="left:1028.4px;top:385px;font-size:16px;color:#161b2e;font-weight:700;letter-spacing:-0.266px;">Customer Details</div>
<div class="r" style="left:1599px;top:378px;width:32px;height:28px;background:#fff;border:1px solid #d3d7de;border-radius:6px;box-sizing:border-box;"></div>
<svg class="r" style="left:1606px;top:384px" width="18" height="18" viewBox="0 0 18 18"><circle cx="8.3" cy="8.3" r="6" fill="none" stroke="#3a4456" stroke-width="1.5"/><path d="M12.6 12.6l3 3" stroke="#3a4456" stroke-width="1.5" stroke-linecap="round"/></svg>
<div class="t" style="left:1028.7px;top:432px;font-size:14px;color:#4b5669;-webkit-text-stroke:0.25px #4b5669;letter-spacing:-0.215px;">Name</div>
<div class="r" style="left:1027.7px;top:454px;width:293px;height:45px;background:#fff;border:1px solid #cdd2dc;border-radius:7px;box-sizing:border-box;"></div>
<div class="t" style="left:1040.7px;top:471px;font-size:14px;color:#15143a;-webkit-text-stroke:0.25px #15143a;letter-spacing:-0.298px;">Jacob Rayner</div>
<svg class="r" style="left:1290.5px;top:472px" width="14" height="8.5" viewBox="0 0 14 8.5"><path d="M1 1l6.0 6.5l6.0 -6.5" fill="none" stroke="#2a3346" stroke-width="1.6"/></svg>
<div class="t" style="left:1340.0px;top:432px;font-size:14px;color:#4b5669;-webkit-text-stroke:0.25px #4b5669;letter-spacing:-0.002px;">Email</div>
<div class="r" style="left:1339px;top:454px;width:293px;height:45px;background:#fff;border:1px solid #cdd2dc;border-radius:7px;box-sizing:border-box;"></div>
<div class="t" style="left:1352.0px;top:471px;font-size:14px;color:#15143a;-webkit-text-stroke:0.25px #15143a;letter-spacing:0.127px;">jacob.rayner@totalmobile.co.uk</div>
<svg class="r" style="left:1601px;top:469px" width="16" height="16" viewBox="0 0 16 16"><circle cx="8" cy="8" r="8" fill="#169a45"/><path d="M4.8 8.2l2.2 2.1 4.2-4.3" fill="none" stroke="#fff" stroke-width="1.6" stroke-linecap="round" stroke-linejoin="round"/></svg>
<div class="t" style="left:1028.7px;top:521px;font-size:14px;color:#4b5669;-webkit-text-stroke:0.25px #4b5669;letter-spacing:0.071px;">Mobile Phone</div>
<div class="r" style="left:1027.7px;top:543px;width:293px;height:45px;background:#fff;border:1px solid #cdd2dc;border-radius:7px;box-sizing:border-box;"></div>
<div class="t" style="left:1040.7px;top:560px;font-size:14px;color:#15143a;-webkit-text-stroke:0.25px #15143a;letter-spacing:-0.135px;">078995501</div>
<svg class="r" style="left:1289.5px;top:558.4px" width="16" height="16" viewBox="0 0 16 16"><circle cx="8" cy="8" r="8" fill="#169a45"/><path d="M4.8 8.2l2.2 2.1 4.2-4.3" fill="none" stroke="#fff" stroke-width="1.6" stroke-linecap="round" stroke-linejoin="round"/></svg>
<div class="t" style="left:1340.0px;top:521px;font-size:14px;color:#4b5669;-webkit-text-stroke:0.25px #4b5669;letter-spacing:-0.169px;">Home Phone</div>
<div class="r" style="left:1339px;top:543px;width:293px;height:45px;background:#fff;border:1px solid #cdd2dc;border-radius:7px;box-sizing:border-box;"></div>
<div class="t" style="left:1352.0px;top:560px;font-size:14px;color:#15143a;-webkit-text-stroke:0.25px #15143a;letter-spacing:1.337px;">-</div>
<svg class="r" style="left:1600px;top:557.5px" width="18" height="18" viewBox="0 0 18 18"><circle cx="9" cy="9" r="8.3" fill="none" stroke="#cfd4dc" stroke-width="1.2"/></svg>
<div class="t" style="left:1028.8px;top:610px;font-size:14.5px;color:#4b5669;-webkit-text-stroke:0.25px #4b5669;letter-spacing:0.164px;">Visit Instructions</div>
<div class="r" style="left:1027.5px;top:632px;width:604.5px;height:146.5px;background:#fff;border:1px solid #cdd2dc;border-radius:7px;box-sizing:border-box;"></div>
<div class="t" style="left:1044.5px;top:653px;font-size:14.2px;color:#1c2033;-webkit-text-stroke:0.25px #1c2033;letter-spacing:0.084px;">To gain access to the flat, please ensure you have the necessary tools ready.</div>
<div class="t" style="left:1044.5px;top:673px;font-size:14.2px;color:#1c2033;-webkit-text-stroke:0.25px #1c2033;letter-spacing:0.032px;">Knock on the door and announce your presence. If there is no response, use the</div>
<div class="t" style="left:1044.5px;top:693px;font-size:14.2px;color:#1c2033;-webkit-text-stroke:0.25px #1c2033;letter-spacing:0.086px;">master key provided to unlock the door. Once inside, check for any maintenance</div>
<div class="t" style="left:1044.5px;top:713px;font-size:14.2px;color:#1c2033;-webkit-text-stroke:0.25px #1c2033;letter-spacing:0.141px;">issues and report back to the office.</div>
<div class="r" style="left:1032.3px;top:800px;width:19.6px;height:19.6px;background:#241a6c;border-radius:50%;"></div>
<div class="r" style="left:1038.6px;top:806.3px;width:7px;height:7px;background:#fff;border-radius:50%;"></div>
<div class="t" style="left:1060.7px;top:802px;font-size:14.2px;color:#3a4456;-webkit-text-stroke:0.25px #3a4456;letter-spacing:-0.187px;">Message</div>
<div class="r" style="left:1146.7px;top:800px;width:19.6px;height:19.6px;background:#fff;border:1.2px solid #cdd2dc;border-radius:50%;box-sizing:border-box;"></div>
<div class="t" style="left:1175.2px;top:802px;font-size:14.2px;color:#3a4456;-webkit-text-stroke:0.25px #3a4456;letter-spacing:-0.089px;">Don&#39;t Message</div>
<div class="r" style="left:1297.4px;top:800px;width:19.6px;height:19.6px;background:#fff;border:1.2px solid #cdd2dc;border-radius:50%;box-sizing:border-box;"></div>
<div class="t" style="left:1325.5px;top:802px;font-size:14.2px;color:#3a4456;-webkit-text-stroke:0.25px #3a4456;letter-spacing:-0.079px;">Never message</div>
<div class="r" style="left:1032.5px;top:856.5px;width:28.5px;height:15.5px;background:#2a1f78;border-radius:8px;"></div>
<div class="r" style="left:1047.0px;top:858.5px;width:11.5px;height:11.5px;background:#fff;border-radius:50%;"></div>
<div class="t" style="left:1076.6px;top:857px;font-size:14.3px;color:#1f2433;-webkit-text-stroke:0.25px #1f2433;letter-spacing:0.004px;">Send letter</div>
<div class="r" style="left:1032.5px;top:902.3px;width:28.5px;height:15.5px;background:#2a1f78;border-radius:8px;"></div>
<div class="r" style="left:1047.0px;top:904.3px;width:11.5px;height:11.5px;background:#fff;border-radius:50%;"></div>
<div class="t" style="left:1076.6px;top:903px;font-size:14.3px;color:#1f2433;-webkit-text-stroke:0.25px #1f2433;letter-spacing:-0.016px;">Confirm contact details checked</div>
<div class="r" style="left:1344px;top:856.5px;width:28.5px;height:15.5px;background:#dadade;border-radius:8px;"></div>
<div class="r" style="left:1345.5px;top:858.0px;width:12.5px;height:12.5px;background:#fff;border-radius:50%;"></div>
<div class="t" style="left:1388.0px;top:857px;font-size:14.3px;color:#1f2433;-webkit-text-stroke:0.25px #1f2433;letter-spacing:0.078px;">Allow self service</div>
<div class="r" style="left:1344px;top:902.3px;width:28.5px;height:15.5px;background:#dadade;border-radius:8px;"></div>
<div class="r" style="left:1345.5px;top:903.8px;width:12.5px;height:12.5px;background:#fff;border-radius:50%;"></div>
<div class="t" style="left:1388.0px;top:903px;font-size:14.3px;color:#1f2433;-webkit-text-stroke:0.25px #1f2433;letter-spacing:0.095px;">Two to attend</div>
<div class="r" style="left:70.9px;top:974.5px;width:229.70000000000002px;height:35px;background:#fdeff0;border:1.5px solid #d9342b;border-radius:18px;box-sizing:border-box;"></div>
<svg class="r" style="left:82.7px;top:986px" width="13" height="13" viewBox="0 0 13 13"><circle cx="6.5" cy="6.5" r="6.5" fill="#d42a2a"/><path d="M6.5 3.2v4" stroke="#fff" stroke-width="1.4" stroke-linecap="round"/><circle cx="6.5" cy="9.5" r=".8" fill="#fff"/></svg>
<div class="t" style="left:103.6px;top:986px;font-size:13.5px;color:#1b1f2c;-webkit-text-stroke:0.25px #1b1f2c;letter-spacing:-0.117px;">Warning: Contact not very nice</div>
<div class="r" style="left:311.2px;top:974.5px;width:207.40000000000003px;height:35px;background:#fdeff0;border:1.5px solid #d9342b;border-radius:18px;box-sizing:border-box;"></div>
<svg class="r" style="left:322.5px;top:986px" width="13" height="13" viewBox="0 0 13 13"><circle cx="6.5" cy="6.5" r="6.5" fill="#d42a2a"/><path d="M6.5 3.2v4" stroke="#fff" stroke-width="1.4" stroke-linecap="round"/><circle cx="6.5" cy="9.5" r=".8" fill="#fff"/></svg>
<div class="t" style="left:343.4px;top:986px;font-size:13.5px;color:#1b1f2c;-webkit-text-stroke:0.25px #1b1f2c;letter-spacing:0.039px;">Warning: Horrible property</div>
<div class="r" style="left:529.2px;top:974.5px;width:118.5px;height:35px;background:#fff4e6;border:1.5px solid #ef9430;border-radius:18px;box-sizing:border-box;"></div>
<svg class="r" style="left:540.5px;top:986px" width="13" height="13" viewBox="0 0 13 13"><circle cx="6.5" cy="6.5" r="6.5" fill="#e5800f"/><path d="M6.5 3.2v4" stroke="#fff" stroke-width="1.4" stroke-linecap="round"/><circle cx="6.5" cy="9.5" r=".8" fill="#fff"/></svg>
<div class="t" style="left:561.1px;top:986px;font-size:13.5px;color:#1b1f2c;-webkit-text-stroke:0.25px #1b1f2c;letter-spacing:0.052px;">Alert: Boiler</div>
<div class="r" style="left:658.4px;top:974.5px;width:128.39999999999998px;height:35px;background:#fff4e6;border:1.5px solid #ef9430;border-radius:18px;box-sizing:border-box;"></div>
<svg class="r" style="left:669.5px;top:986px" width="13" height="13" viewBox="0 0 13 13"><circle cx="6.5" cy="6.5" r="6.5" fill="#e5800f"/><path d="M6.5 3.2v4" stroke="#fff" stroke-width="1.4" stroke-linecap="round"/><circle cx="6.5" cy="9.5" r=".8" fill="#fff"/></svg>
<div class="t" style="left:690.8px;top:986px;font-size:13.5px;color:#1b1f2c;-webkit-text-stroke:0.25px #1b1f2c;letter-spacing:-0.038px;">Alert: Kitchen</div>
<div class="r" style="left:797.3px;top:974.5px;width:136.70000000000005px;height:35px;background:#fff4e6;border:1.5px solid #ef9430;border-radius:18px;box-sizing:border-box;"></div>
<svg class="r" style="left:808.5px;top:986px" width="13" height="13" viewBox="0 0 13 13"><circle cx="6.5" cy="6.5" r="6.5" fill="#e5800f"/><path d="M6.5 3.2v4" stroke="#fff" stroke-width="1.4" stroke-linecap="round"/><circle cx="6.5" cy="9.5" r=".8" fill="#fff"/></svg>
<div class="t" style="left:829.7px;top:986px;font-size:13.5px;color:#1b1f2c;-webkit-text-stroke:0.25px #1b1f2c;letter-spacing:-0.079px;">Alert: Fire door</div>
<div class="r" style="left:71px;top:1026px;width:1584px;height:80px;background:#fff;border:1px solid #dde1e8;border-radius:9px;box-sizing:border-box;"></div>
<div class="t" style="left:99.5px;top:1051px;font-size:15.5px;color:#161b2e;font-weight:700;letter-spacing:-0.34px;">Advanced</div>
</body></html>
